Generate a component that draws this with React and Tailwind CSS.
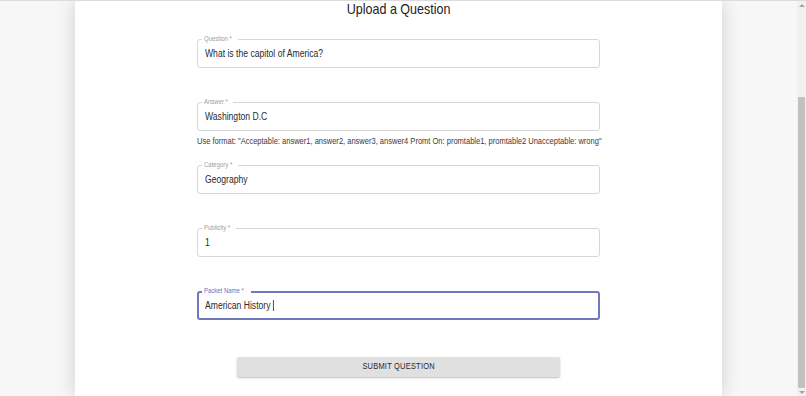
import React from "react";

const FONT = { fontFamily: "'Liberation Sans',Arial,sans-serif" };

function Field({ label, value, focused, caret }) {
  return (
    <div className="relative">
      <div
        className={
          focused
            ? "h-[29px] rounded-[3px] border-2 border-[#7078be] flex items-center px-[6px]"
            : "h-[29px] rounded-[3px] border border-[#d6d6d6] flex items-center px-[7px]"
        }
      >
        <span className="inline-flex items-center origin-left scale-x-[0.86] text-[10px] leading-none text-[#2a2a2a] whitespace-nowrap">
          {value}
          {caret && <span className="ml-[3px] inline-block w-px h-[11px] bg-[#333]" />}
        </span>
      </div>
      <span
        className={
          "absolute top-[-4px] left-[5px] px-[2px] bg-white text-[6.8px] leading-[8px] whitespace-nowrap " +
          (focused ? "text-[#6a72bd]" : "text-[#a0a0a0]")
        }
      >
        <span className="inline-block origin-left scale-x-[0.88]">{label}</span>
      </span>
    </div>
  );
}

export default function App() {
  return (
    <div style={FONT} className="flex h-[396px] w-[806px] overflow-hidden bg-[#f7f7f7] border-t border-[#dcdcdc]">
      <div className="flex-1 flex justify-center">
        <div className="w-[647px] bg-white shadow-[0_0_18px_rgba(0,0,0,0.16)] flex flex-col items-center">
          <h1 className="text-[14.4px] leading-[17px] text-[#222] scale-x-[0.87] origin-center">Upload a Question</h1>
          <div className="w-[403px] flex flex-col mt-[21px]">
            <Field label="Question *" value="What is the capitol of America?" />
            <div className="h-[34px]" />
            <Field label="Answer *" value="Washington D.C" />
            <p className="mt-[5px] mb-[19px] text-[8.8px] leading-[10px] text-[#3a3a3a] whitespace-nowrap origin-left scale-x-[0.855]">
              Use format: "Acceptable: answer1, answer2, answer3, answer4 Promt On: promtable1, promtable2 Unacceptable: wrong"
            </p>
            <Field label="Category *" value="Geography" />
            <div className="h-[34px]" />
            <Field label="Publicity *" value="1" />
            <div className="h-[34px]" />
            <Field label="Packet Name *" value="American History" focused caret />
          </div>
          <button className="mt-[37px] w-[323px] h-[20px] rounded-[2px] bg-[#e0e0e0] shadow-[0_1px_2px_rgba(0,0,0,0.25)] text-[8.8px] tracking-[0.25px] text-[#2a2a2a] flex items-center justify-center">
            <span className="inline-block scale-x-[0.85] origin-center">SUBMIT QUESTION</span>
          </button>
        </div>
      </div>
      <div className="w-[9px] bg-[#f1f1f1] flex flex-col items-center">
        <div className="h-[9px] flex items-center justify-center">
          <div className="w-0 h-0 border-l-[3px] border-r-[3px] border-b-[3px] border-l-transparent border-r-transparent border-b-[#a3a3a3]" />
        </div>
        <div className="h-[87px]" />
        <div className="w-[7px] h-[291px] bg-[#c1c1c1]" />
        <div className="flex-1 flex items-center justify-center">
          <div className="w-0 h-0 border-l-[3px] border-r-[3px] border-t-[3px] border-l-transparent border-r-transparent border-t-[#a3a3a3]" />
        </div>
      </div>
    </div>
  );
}
